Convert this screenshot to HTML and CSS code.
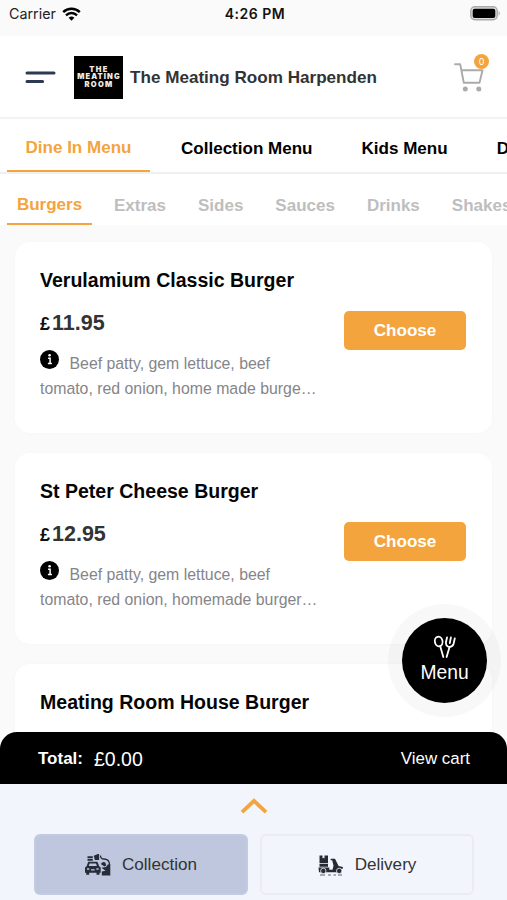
FILE: index.html
```html
<!DOCTYPE html>
<html lang="en">
<head>
<meta charset="utf-8">
<title>The Meating Room Harpenden</title>
<link rel="stylesheet" href="styles.css">
</head>
<body>
<div class="app">
  <div class="status">
    <div class="carrier"><span>Carrier</span>
      <svg width="19" height="14" viewBox="0 0 19 14" fill="none" stroke="#000" stroke-width="2.5"><path d="M1.2 5.2a12 12 0 0 1 16.6 0"/><path d="M4 8.3a8 8 0 0 1 11 0"/><path d="M9.5 13.7 6.6 10.8a4.2 4.2 0 0 1 5.8 0z" fill="#000" stroke="none"/></svg>
    </div>
    <span class="time">4:26 PM</span>
    <div class="power"><svg width="31" height="15" viewBox="0 0 31 15"><rect x=".8" y=".8" width="26.4" height="13" rx="4" fill="#ddd" stroke="#aaa" stroke-width="1.4"/><rect x="2.7" y="2.7" width="22.6" height="9.3" rx="2" fill="#000"/><path d="M28.6 5a3 3 0 0 1 0 4.8z" fill="#aaa"/></svg></div>
  </div>

  <header class="header">
    <svg class="burger" width="31" height="12" viewBox="0 0 31 12" stroke="#2c3a52" stroke-width="3" stroke-linecap="round"><path d="M2 2H29M2 10.5H17.6"/></svg>
    <div class="logo"><span>THE</span><span class="logo-wide">MEATING</span><span>ROOM</span></div>
    <h1>The Meating Room Harpenden</h1>
    <div class="cart">
      <svg width="30" height="29" viewBox="0 0 30 29" fill="none" stroke="#ababab" stroke-width="1.9" stroke-linecap="round" stroke-linejoin="round"><path d="M1 1.3H6.2L9.8 19.8H25.5L28.5 7.2H7.7"/><circle cx="11.3" cy="26" r="2.5" fill="#ababab" stroke="none"/><circle cx="24.8" cy="26" r="2.5" fill="#ababab" stroke="none"/></svg>
      <span class="badge">0</span>
    </div>
  </header>

  <nav class="menus">
    <span class="on">Dine In Menu</span><span>Collection Menu</span><span>Kids Menu</span><span>Drinks Menu</span>
  </nav>
  <nav class="cats">
    <span class="on">Burgers</span><span>Extras</span><span>Sides</span><span>Sauces</span><span>Drinks</span><span>Shakes</span>
  </nav>

  <main class="list">
    <article class="card">
      <div class="info">
        <h2>Verulamium Classic Burger</h2>
        <div class="price"><small>£</small>11.95</div>
        <p><svg class="i" width="19" height="19" viewBox="0 0 19 19"><circle cx="9.5" cy="9.5" r="9.5" fill="#000"/><path d="M8.1 8.2h2v5.2M7.9 13.5h4" stroke="#fff" stroke-width="1.5" fill="none"/><circle cx="9.6" cy="5.3" r="1.3" fill="#fff"/></svg>Beef patty, gem lettuce, beef<br>tomato, red onion, home made burge…</p>
      </div>
      <button>Choose</button>
    </article>
    <article class="card">
      <div class="info">
        <h2>St Peter Cheese Burger</h2>
        <div class="price"><small>£</small>12.95</div>
        <p><svg class="i" width="19" height="19" viewBox="0 0 19 19"><circle cx="9.5" cy="9.5" r="9.5" fill="#000"/><path d="M8.1 8.2h2v5.2M7.9 13.5h4" stroke="#fff" stroke-width="1.5" fill="none"/><circle cx="9.6" cy="5.3" r="1.3" fill="#fff"/></svg>Beef patty, gem lettuce, beef<br>tomato, red onion, homemade burger…</p>
      </div>
      <button>Choose</button>
    </article>
    <article class="card">
      <div class="info"><h2>Meating Room House Burger</h2></div>
    </article>
  </main>

  <div class="fab">
    <svg width="24" height="24" viewBox="0 0 24 24" fill="none" stroke="#fff" stroke-width="1.8" stroke-linecap="round" stroke-linejoin="round"><ellipse cx="5.7" cy="6.5" rx="3.8" ry="4.8" transform="rotate(-14 5.7 6.5)"/><path d="M7.3 11.5 10.3 22M16.6 11.8 13.6 22"/><path d="M14 2.5 12.9 7.5Q13 11.5 16.3 11.8Q19.6 12 20.6 8.7L21.8 3.3M17.9 2.5 16.8 8"/></svg>
    <span>Menu</span>
  </div>

  <div class="total">
    <div><b>Total:</b><span class="sum">£0.00</span></div>
    <span class="view">View cart</span>
  </div>

  <footer class="footer">
    <svg class="up" width="28" height="17" viewBox="0 0 28 17" fill="none" stroke="#f4a43d" stroke-width="3.8"><path d="M2 15.2 14 3.8 26 15.2"/></svg>
    <div class="modes">
      <div class="mode active">
        <svg width="26" height="22" viewBox="0 0 26 22" fill="#272c3b"><path d="M2.5 2.3h5.3v1.6H2.5zM2.5 4.7h5.3v2H2.5zM8.8 1.8l4-1.8h1.3v6H9.8z"/><path fill-rule="evenodd" d="M3.2 7.8h9.2l1.8 4.4 1.5 1.4v5.2h-1.2v2h-3v-2H4.2v2h-3v-2H0v-5.2l1.6-1.4zM4.6 9.6l-.9 2.4h8.2L11 9.600zM2 14.2v1.600h2.300v-1.600zM11.400 14.200v1.600h2.200v-1.600zM6 15.200v1.400h3.700v-1.400z"/><path d="M15.5 1.500Q15.500 5 19 5Q23.700 5.300 24.300 9v11" fill="none" stroke="#272c3b" stroke-width="1.300"/><path d="M15.800 10q2-3 4.500-1.500l1 3-2 1z"/><path d="M25.300 10v11.500h-8.500v-4l3.800-.7-4.200-3 4.500-.8 2-2.500z"/></svg>
        <span>Collection</span>
      </div>
      <div class="mode">
        <svg width="26" height="21" viewBox="0 0 26 21" fill="#272a32"><path d="M1.500.5h3v3l1-.7 1 .7v-3H10v7.800H1.500zM1.500 9H10v2.800H1.500z"/><path d="M.5 12.500h10.800v2.200h3.200l1-4-1.300-5.500h-1.500V3.700h4.300l3.600 7.400 4.300 1v1.300l-3.800 1-2 2.900H1z"/><g stroke="#f3f5fc" stroke-width=".8"><circle cx="5.300" cy="15.900" r="2.700"/><circle cx="21.200" cy="15.900" r="2.700"/></g><path d="M2 20h5M10 20h3M15.500 20h2.500M20 20h4" stroke="#62646b" stroke-width="1.100"/></svg>
        <span>Delivery</span>
      </div>
    </div>
  </footer>
</div>
</body>
</html>
```

FILE: styles.css
```css
* { box-sizing: border-box; }
body { margin: 0; font-family: "Liberation Sans", Arial, sans-serif; }
.app { position: relative; width: 507px; height: 900px; overflow: hidden; display: flex; flex-direction: column; background: #fafafa; }
.app > * { flex-shrink: 0; }
h1, h2, p { margin: 0; }
svg { display: block; flex: none; }

.status { height: 36px; padding: 0 6px 9px 9px; display: grid; grid-template-columns: 1fr auto 1fr; align-items: center; font-family: Inter, sans-serif; font-size: 14.3px; color: #222; background: #fafafa; }
.carrier { display: flex; align-items: center; gap: 6px; }
.time { font-weight: 600; font-size: 14px; letter-spacing: .5px; color: #111; }
.power { justify-self: end; }

.header { height: 83px; padding: 0 23px 0 25px; display: flex; align-items: center; background: #fff; border-bottom: 2px solid #f3f3f3; }
.logo { width: 49px; height: 43px; margin: 1px 7px 0 18px; background: #000; color: #f0ebe0; display: flex; flex-direction: column; align-items: center; justify-content: center; font: 900 7.5px/7.6px Inter, sans-serif; letter-spacing: 1.3px; }
.logo span { display: block; height: 7.6px; margin-right: -1px; }
.logo-wide { letter-spacing: 1.1px; }
.header h1 { padding-top: 3px; font-size: 17.1px; font-weight: 700; color: #333; white-space: nowrap; }
.burger { margin-top: 1px; }
.cart { position: relative; margin-left: auto; padding-top: 1px; }
.badge { position: absolute; top: -8px; right: -5px; width: 15px; height: 15px; border-radius: 50%; background: #f4a43d; color: #fff; font: 9px/16px Inter, sans-serif; text-align: center; }

.menus { height: 55px; padding-left: 7px; display: flex; background: #fff; border-bottom: 2px solid #f0f0f0; font-size: 17.05px; font-weight: 700; white-space: nowrap; }
.menus span { flex: none; height: 53px; line-height: 59px; margin-right: 49px; }
.menus .on { width: 143px; line-height: 57px; margin-right: 31px; text-align: center; color: #f4a43d; border-bottom: 2px solid #f4a43d; }
.cats { height: 51px; padding-left: 7px; display: flex; gap: 32px; background: #fff; font-size: 17px; font-weight: 700; color: #bebebe; white-space: nowrap; }
.cats span { flex: none; height: 51px; line-height: 63px; }
.cats .on { width: 85px; margin-right: -10px; text-align: center; color: #f4a43d; border-bottom: 2px solid #f4a43d; line-height: 61px; }

.list { height: 507px; padding: 17px 15px 0; display: flex; flex-direction: column; gap: 20px; overflow: hidden; }
.card { flex: none; height: 191px; padding: 0 25px; display: flex; justify-content: space-between; border-radius: 15px; background: #fff; box-shadow: 0 0 4px rgba(0,0,0,.018); }
.card h2 { padding-top: 26px; font-size: 19.55px; line-height: 24px; color: #050505; white-space: nowrap; }
.price { margin-top: 18px; font-size: 21.5px; line-height: 26px; font-weight: 700; color: #333; }
.price small { font-size: 18px; margin-right: 2px; color: #111; }
.card p { margin-top: 14px; font-size: 15.85px; line-height: 24.5px; color: #858589; white-space: nowrap; }
.i { display: inline-block; margin-right: 10.5px; vertical-align: -1px; position: relative; top: -1px; }
.card button { width: 122px; height: 39px; margin: 69px 1px 0 0; padding: 0; border: 0; border-radius: 5px; background: #f4a43d; color: #fff; font: 700 17.1px "Liberation Sans", sans-serif; }

.fab { position: absolute; left: 388px; top: 604px; width: 113px; height: 113px; border: 14px solid rgba(0,0,0,.027); border-radius: 50%; background: #000; background-clip: padding-box; color: #fff; display: flex; flex-direction: column; align-items: center; padding-top: 17px; font-size: 19.3px; line-height: 27px; }

.total { height: 52px; padding: 2px 37px 0 38px; display: flex; justify-content: space-between; align-items: center; border-radius: 17px 17px 0 0; background: #000; color: #fff; }
.total div { display: flex; align-items: center; gap: 11px; }
.total b { font-size: 17px; }
.sum { font-size: 19.5px; }
.view { font-size: 16.9px; }

.footer { flex: 1; padding: 13px 33px 0 34px; background: #f3f5fc; }
.up { margin: 0 auto 20px; }
.modes { display: grid; grid-template-columns: 1fr 1fr; gap: 12px; }
.mode { height: 61px; padding-top: 1px; display: flex; align-items: center; justify-content: center; gap: 11px; border: 2px solid #ebecf1; border-radius: 6px; font-size: 17.1px; color: #333; }
.active { background: #bec7dd; border-color: #c3cbe0; }
```
